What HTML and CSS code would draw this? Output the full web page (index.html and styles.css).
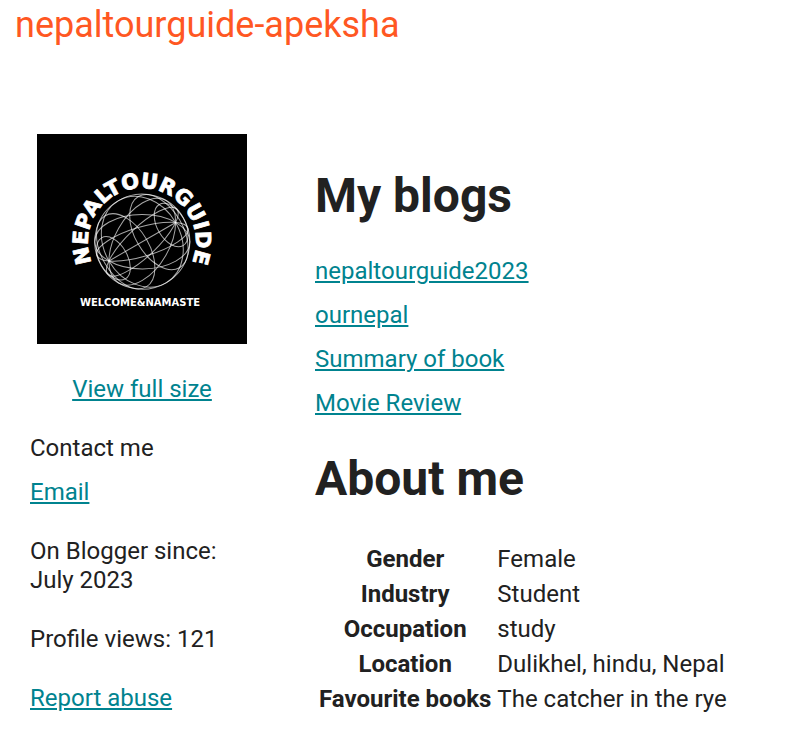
FILE: index.html
```html
<!DOCTYPE html>
<html lang="en">
<head>
<meta charset="utf-8">
<title>User profile: nepaltourguide-apeksha</title>
<link rel="stylesheet" href="styles.css">
</head>
<body>
<header class="page-header">
  <h1 class="profile-name">nepaltourguide-apeksha</h1>
</header>
<main class="profile">
  <aside class="sidebar">
    <div class="portrait">
      <svg class="photo" viewBox="0 0 210 210" role="img" aria-label="Profile photo">
        <defs>
          <path id="arc" d="M58.2 135A54 54 0 1 1 151.8 135"/>
        </defs>
        <rect width="210" height="210"/>
        <g class="globe" transform="translate(105.3 107.7) rotate(-30)">
          <circle r="47.5"/>
          <path d="M-38.5 0H38.5"/>
          <!-- meridians -->
          <ellipse rx="47.5" ry="14.7" transform="rotate(13.6)"/>
          <ellipse rx="47.5" ry="14.7" transform="rotate(-13.6)"/>
          <ellipse rx="47.5" ry="27.2" transform="rotate(30.3)"/>
          <ellipse rx="47.5" ry="27.2" transform="rotate(-30.3)"/>
          <ellipse rx="38.5" ry="47.5"/>
          <!-- parallels -->
          <ellipse cx="33.3" rx="13.9" ry="23.7"/>
          <ellipse cx="-33.3" rx="13.9" ry="23.7"/>
          <ellipse cx="19.2" rx="24" ry="41.1"/>
          <ellipse cx="-19.2" rx="24" ry="41.1"/>
        </g>
        <text class="logo-name"><textPath href="#arc" startOffset="50%">NEPALTOURGUIDE</textPath></text>
        <text class="logo-tagline" x="103" y="172">WELCOME&amp;NAMASTE</text>
      </svg>
      <a href="#photo">View full size</a>
    </div>
    <section class="contact">
      <h2 class="contact-title">Contact me</h2>
      <a href="#email">Email</a>
    </section>
    <p>On Blogger since: July 2023</p>
    <p>Profile views: 121</p>
    <p><a href="#report">Report abuse</a></p>
  </aside>
  <div class="content">
    <h2 class="section-title">My blogs</h2>
    <ul class="blogs">
      <li><a href="#blog-1">nepaltourguide2023</a></li>
      <li><a href="#blog-2">ournepal</a></li>
      <li><a href="#blog-3">Summary of book</a></li>
      <li><a href="#blog-4">Movie Review</a></li>
    </ul>
    <h2 class="section-title">About me</h2>
    <table class="about">
      <tr><th scope="row">Gender</th><td>Female</td></tr>
      <tr><th scope="row">Industry</th><td>Student</td></tr>
      <tr><th scope="row">Occupation</th><td>study</td></tr>
      <tr><th scope="row">Location</th><td>Dulikhel, hindu, Nepal</td></tr>
      <tr><th scope="row">Favourite books</th><td>The catcher in the rye</td></tr>
    </table>
  </div>
</main>
</body>
</html>
```
FILE: styles.css
```css
body {
  margin: 0;
  background: #fff;
  color: #212121;
  font: 24px/29px Roboto, sans-serif;
}

a {
  color: #00838f;
}

p {
  margin: 0;
}

.page-header {
  padding: 3px 15px 1px;
}

.profile-name {
  margin: 0;
  color: #ff5722;
  font-size: 36px;
  font-weight: 400;
  line-height: 44px;
}

.profile {
  display: grid;
  grid-template-columns: 224px 1fr;
  column-gap: 61px;
  padding: 86px 30px 30px;
}

.sidebar {
  display: flex;
  flex-direction: column;
  gap: 30px;
}

.portrait {
  display: grid;
  gap: 31px;
  justify-items: center;
}

.photo {
  width: 210px;
  height: 210px;
}

.contact {
  display: grid;
  gap: 15px;
  justify-items: start;
}

.contact-title {
  margin: 0;
  font-size: 24px;
  font-weight: 400;
}

.globe {
  fill: none;
  stroke: #fff;
  stroke-width: 1;
  stroke-opacity: 0.65;
}

.logo-name,
.logo-tagline {
  fill: #fff;
  font-family: "DejaVu Sans", sans-serif;
  font-weight: 700;
  text-anchor: middle;
}

.logo-name {
  font-size: 21px;
  stroke: #fff;
  stroke-width: 0.8;
}

.logo-tagline {
  font-size: 10px;
}

.content {
  padding-top: 33px;
}

.section-title {
  margin: 0 0 32px;
  font-size: 48px;
  font-weight: 700;
  line-height: 58px;
}

.blogs {
  display: grid;
  gap: 15px;
  margin: 0 0 32px;
  padding: 0;
  list-style: none;
}

.about {
  border-spacing: 2px 3px;
}

.about th,
.about td {
  padding: 1px 2px;
  line-height: 30px;
}
```
